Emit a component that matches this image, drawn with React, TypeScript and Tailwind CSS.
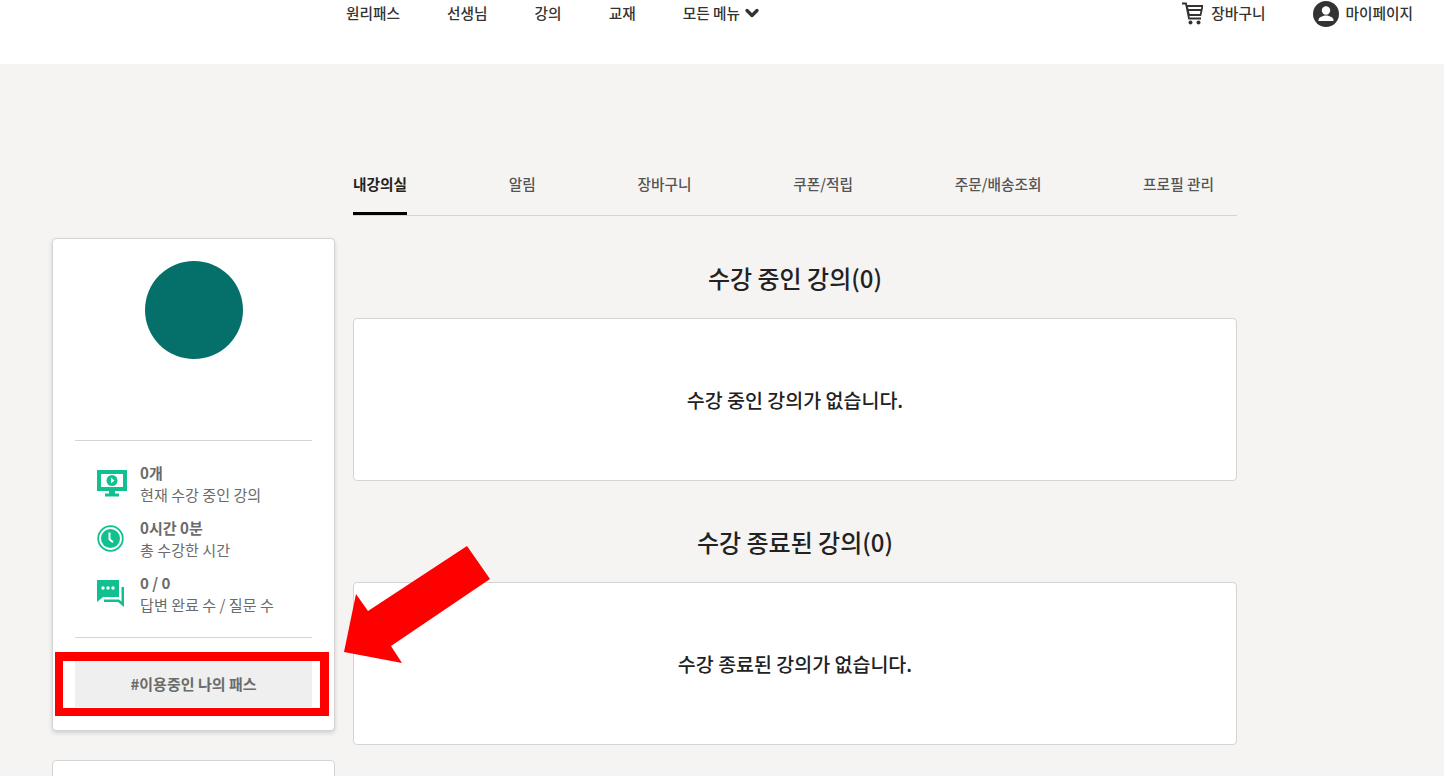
import { ChevronDown } from "lucide-react";

const font = { fontFamily: '"Noto Sans CJK KR", "Noto Sans", sans-serif' };

const tabs = [
  { label: "내강의실", active: true },
  { label: "알림" },
  { label: "장바구니" },
  { label: "쿠폰/적립" },
  { label: "주문/배송조회" },
  { label: "프로필 관리" },
];

function MonitorIcon() {
  return (
    <svg width="30" height="27" viewBox="0 0 30 27" fill="none">
      <path d="M0 0h30v21H0z" fill="#10c08e" />
      <path d="M4 4h22v13H4z" fill="#fff" />
      <circle cx="15" cy="10.5" r="5.5" fill="#10c08e" />
      <path d="M14 7.500l3.500 3-3.500 3z" fill="#fff" />
      <path d="M12 21h6v3h-6zM8 23.500h14v3H8z" fill="#10c08e" />
    </svg>
  );
}

function ClockIcon() {
  return (
    <svg width="27" height="27" viewBox="0 0 27 27" fill="none">
      <circle cx="13.500" cy="13.500" r="12.300" stroke="#10c08e" strokeWidth="1.800" />
      <circle cx="13.500" cy="13.500" r="9.500" fill="#10c08e" />
      <path d="M12.500 7.500v6.700l3.500 3" stroke="#fff" strokeWidth="2" />
    </svg>
  );
}

function ChatIcon() {
  return (
    <svg width="28" height="27" viewBox="0 0 28 27" fill="none">
      <path d="M0 0h22v17H6l-6 5z" fill="#10c08e" />
      <circle cx="6" cy="8" r="1.700" fill="#fff" />
      <circle cx="11" cy="8" r="1.700" fill="#fff" />
      <circle cx="16" cy="8" r="1.700" fill="#fff" />
      <path d="M24.500 7H27v20l-6-5H7v-2.500h15l2.500 2z" fill="#10c08e" />
    </svg>
  );
}

function StatRow({ icon, top, bottom }: { icon: React.ReactNode; top: string; bottom: string }) {
  return (
    <div className="flex h-[55px] items-start">
      <div className="flex h-[44px] w-[65px] items-center pl-[22px]">{icon}</div>
      <div className="text-[15.100px] leading-[22px] text-[#6b6b6b]">
        <div className="font-bold">{top}</div>
        <div>{bottom}</div>
      </div>
    </div>
  );
}

function EmptyBox({ text }: { text: string }) {
  return (
    <div className="flex h-[163px] items-center justify-center rounded-[4px] border border-[#d4d4d4] bg-white text-[19.500px] font-medium text-[#222]">
      {text}
    </div>
  );
}

export default function App() {
  return (
    <div className="relative h-[776px] overflow-hidden bg-[#f5f4f3]" style={font}>
      {/* Header */}
      <header className="flex h-[64px] items-start justify-between bg-white pl-[346px] pr-[31px]">
        <nav className="flex h-[27px] items-center gap-[47px] text-[14.700px] font-medium text-[#333]">
          <span>원리패스</span>
          <span>선생님</span>
          <span>강의</span>
          <span>교재</span>
          <span className="flex items-center gap-[2px]">
            모든 메뉴
            <ChevronDown size={20} strokeWidth={4} />
          </span>
        </nav>
        <div className="flex h-[27px] items-center text-[14.700px] font-medium text-[#333]">
          <span className="flex items-center gap-[8px]">
            <svg width="21" height="23" viewBox="0 0 21 23" fill="none">
              <path d="M0 1.500h4l3 15h12" stroke="#333" strokeWidth="1.800" />
              <path d="M4.800 4H20.500l-2 9H7z" stroke="#333" strokeWidth="1.800" />
              <path d="M5.500 8h14.500" stroke="#333" strokeWidth="2" />
              <circle cx="8.500" cy="20.500" r="2" fill="#333" />
              <circle cx="16.500" cy="20.500" r="2" fill="#333" />
            </svg>
            장바구니
          </span>
          <span className="ml-[48px] flex items-center gap-[6px]">
            <svg width="26" height="26" viewBox="0 0 26 26">
              <circle cx="13" cy="13" r="13" fill="#333" />
              <circle cx="13" cy="9.500" r="4.200" fill="#fff" />
              <path d="M5.500 19c0-3 5-4.500 7.500-4.500s7.500 1.500 7.500 4.500v1h-15z" fill="#fff" />
            </svg>
            마이페이지
          </span>
        </div>
      </header>

      <div className="flex pl-[52px]">
        {/* Sidebar */}
        <aside className="mr-[18px] mt-[174px] w-[283px] shrink-0">
          <div className="h-[493px] rounded-[4px] border border-[#d4d4d4] bg-white px-[22px] shadow-[0_2px_4px_rgba(0,0,0,0.15)]">
            <div className="mx-auto mt-[22px] h-[98px] w-[98px] rounded-full bg-[#05706a]" />
            <div className="mt-[81px] border-t border-[#d4d4d4] pt-[20px]">
              <StatRow icon={<MonitorIcon />} top="0개" bottom="현재 수강 중인 강의" />
              <StatRow icon={<ClockIcon />} top="0시간 0분" bottom="총 수강한 시간" />
              <StatRow icon={<ChatIcon />} top="0 / 0" bottom="답변 완료 수 / 질문 수" />
            </div>
            <div className="mt-[11px] border-t border-[#d4d4d4] pt-[23px]">
              <div className="flex h-[46px] items-center justify-center bg-[#efefef] text-[15px] font-bold text-[#6b6b6b]">
                #이용중인 나의 패스
              </div>
            </div>
          </div>
          <div className="mt-[29px] h-[100px] rounded-[4px] border border-[#d4d4d4] bg-white" />
        </aside>

        {/* Main */}
        <main className="mt-[100px] w-[884px]">
          <div className="flex h-[52px] items-start justify-between border-b border-[#d4d4d4] pr-[23px] text-[14.700px] leading-[40px] text-[#555]">
            {tabs.map((t) => (
              <div
                key={t.label}
                className={t.active ? "h-[51px] border-b-[3px] border-black font-bold text-[#222]" : "font-medium"}
              >
                {t.label}
              </div>
            ))}
          </div>
          <h2 className="mt-[42px] text-center text-[24px] leading-[40px] font-medium text-[#222]">수강 중인 강의(0)</h2>
          <div className="mt-[20px]">
            <EmptyBox text="수강 중인 강의가 없습니다." />
          </div>
          <h2 className="mt-[41px] text-center text-[24px] leading-[40px] font-medium text-[#222]">수강 종료된 강의(0)</h2>
          <div className="mt-[20px]">
            <EmptyBox text="수강 종료된 강의가 없습니다." />
          </div>
        </main>
      </div>

      {/* Annotation over the screenshot */}
      <div className="absolute left-[55px] top-[652px] h-[64px] w-[274px] border-[9px] border-b-[8px] border-l-[8px] border-[#ff0000]" />
      <svg className="absolute left-0 top-0" width="1444" height="776">
        <polygon points="467,546 490,579 391,646 402,663 344,652 356,594 368,611" fill="#ff0000" />
      </svg>
    </div>
  );
}
